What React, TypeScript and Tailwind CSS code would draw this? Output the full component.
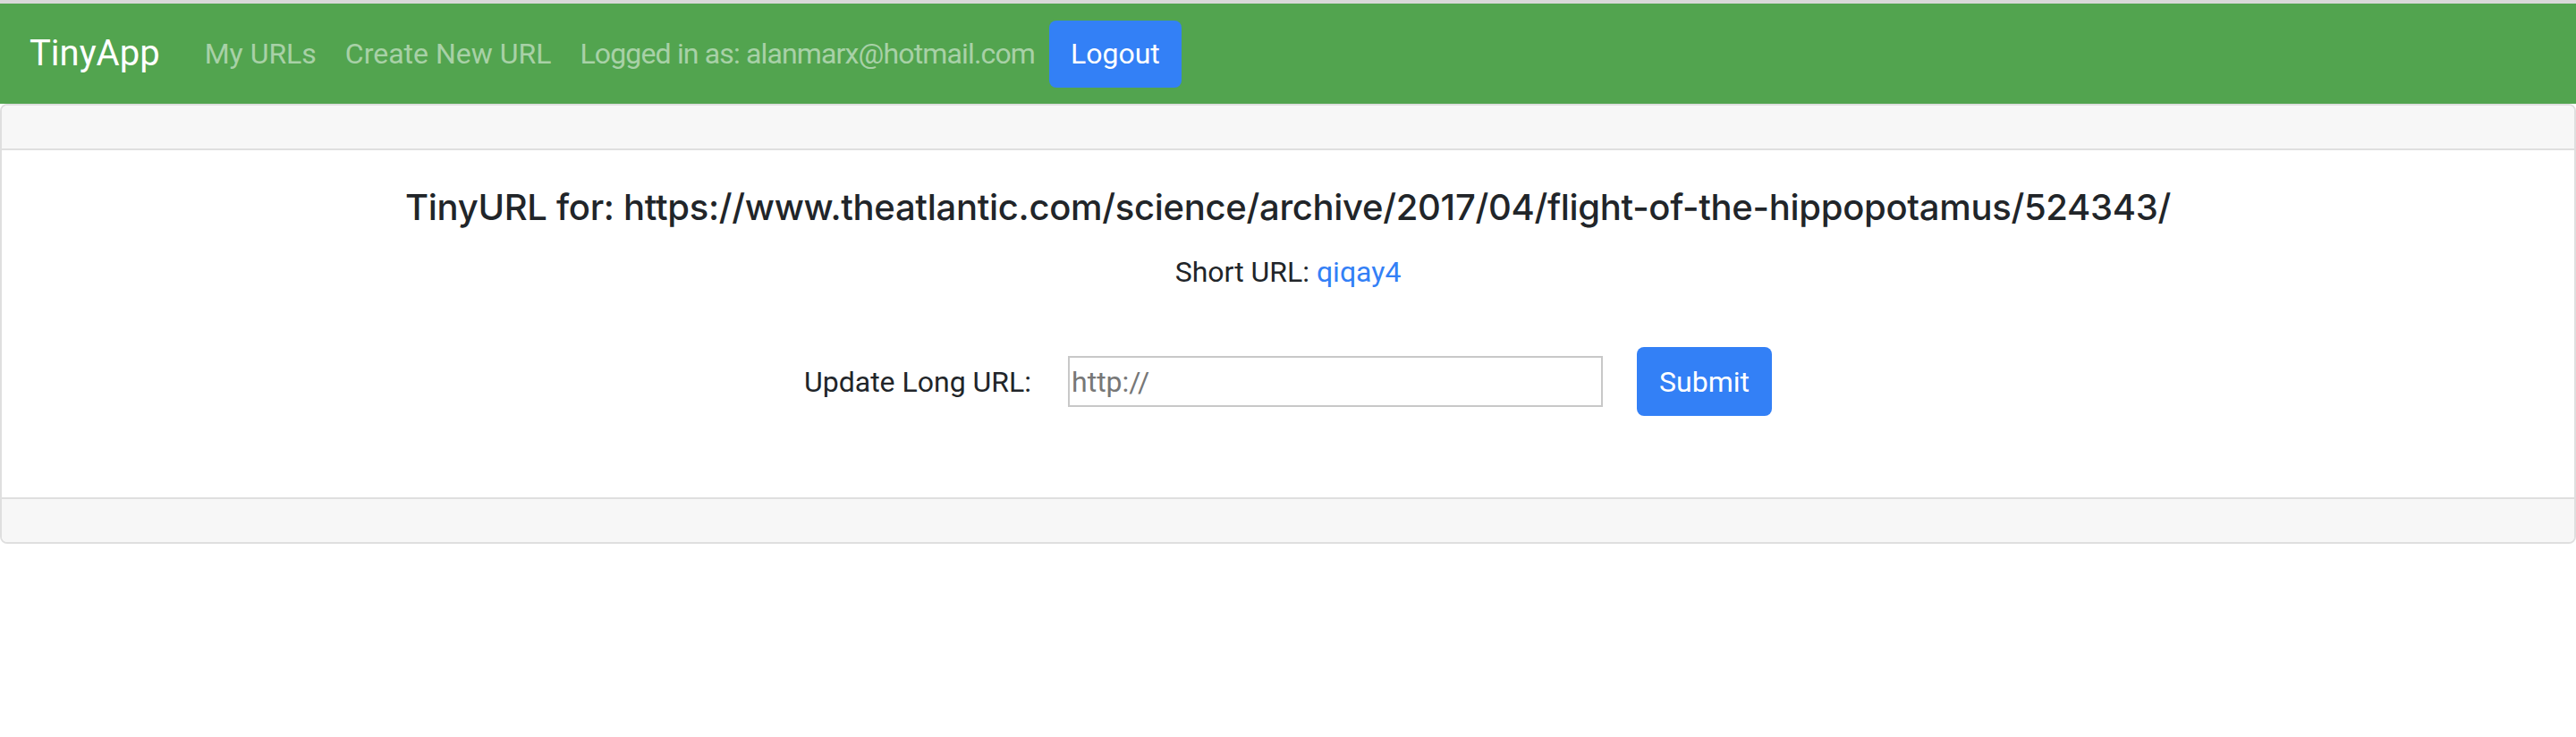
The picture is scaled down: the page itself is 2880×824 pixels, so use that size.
export default function App() {
  return (
    <div className="min-h-screen bg-white border-t-[4px] border-[#d9d9d9] font-['Roboto','Liberation_Sans',sans-serif] text-[#212529]">
      <nav className="h-[112px] bg-[#52a44f] px-[33px] flex items-center">
        <a className="text-[40px] leading-[60px] text-white mr-[34px]" href="#">
          TinyApp
        </a>
        <a className="px-[16px] text-[32px] leading-[48px] text-white/50" href="#">
          My URLs
        </a>
        <a className="px-[16px] text-[32px] leading-[48px] text-white/50" href="#">
          Create New URL
        </a>
        <span className="px-[16px] text-[32px] leading-[48px] tracking-[-0.85px] text-white/50">
          Logged in as: alanmarx@hotmail.com
        </span>
        <button className="h-[75px] px-[24px] rounded-[8px] bg-[#3380f6] text-white text-[32px] leading-[48px]">
          Logout
        </button>
      </nav>

      <div className="border-2 border-[#dfdfdf] rounded-[8px] overflow-hidden">
        <div className="h-[48px] bg-[#f7f7f7] border-b-2 border-[#dfdfdf] box-content" />
        <div className="pt-[40px] pb-[91px] text-center">
          <h5 className="font-['Inter','Liberation_Sans',sans-serif] text-[40px] leading-[48px] font-medium tracking-[-0.3px] mb-[24px]">
            TinyURL for: https://www.theatlantic.com/science/archive/2017/04/flight-of-the-hippopotamus/524343/
          </h5>
          <p className="text-[32px] leading-[48px]">
            Short URL: <a className="text-[#3380f6]" href="#">qiqay4</a>
          </p>
          <form className="mt-[60px] flex items-center justify-center">
            <label className="text-[32px] leading-[48px] mr-[41px]">Update Long URL:</label>
            <input
              className="w-[598px] h-[57px] border-2 border-[#c8c8c8] px-[2px] text-[32px] placeholder:text-[#777]"
              placeholder="http://"
              type="text"
            />
            <button
              type="button"
              className="ml-[38px] h-[77px] w-[151px] rounded-[8px] bg-[#3380f6] text-white text-[32px] leading-[48px]"
            >
              Submit
            </button>
          </form>
        </div>
        <div className="h-[48px] bg-[#f7f7f7] border-t-2 border-[#dfdfdf] box-content" />
      </div>
    </div>
  );
}
